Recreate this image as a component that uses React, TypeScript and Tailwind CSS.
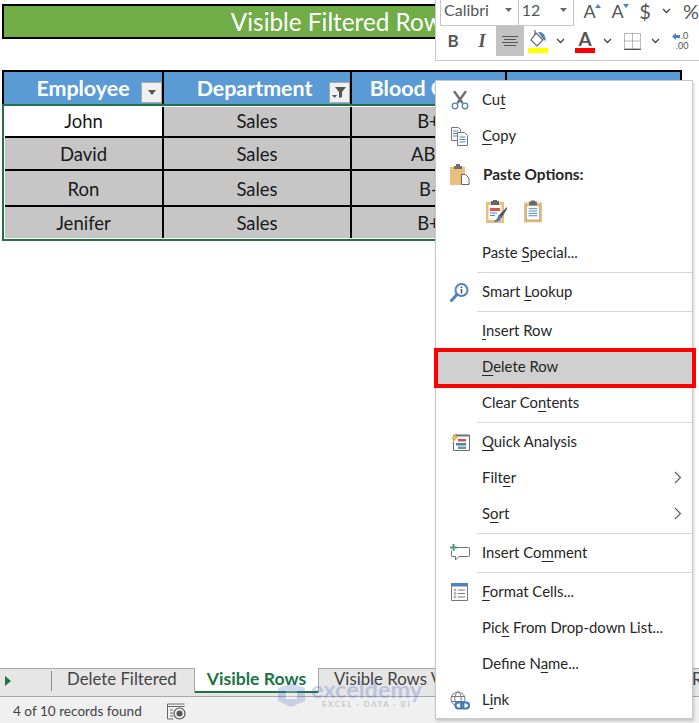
import { ReactNode } from 'react';

const rows = [
  ['John', 'Sales', 'B+', true],
  ['David', 'Sales', 'AB+', false],
  ['Ron', 'Sales', 'B-', false],
  ['Jenifer', 'Sales', 'B+', false],
] as const;

const rowHeights = ['h-[31px]', 'h-[33px]', 'h-[36px]', 'h-[31px]'];
const rowPads = ['', 'pt-[2px]', 'pt-[4px]', 'pt-[2px]'];

function Chevron() {
  return (
    <svg width="9" height="6" viewBox="0 0 9 6" fill="none">
      <path d="M1 1l3.5 3.5L8 1" stroke="#444" strokeWidth="1.3" />
    </svg>
  );
}

function CaretDown() {
  return (
    <svg width="7" height="4" viewBox="0 0 7 4">
      <path d="M0 0h7L3.5 4z" fill="#666" />
    </svg>
  );
}

function FilterButton({ filtered }: { filtered?: boolean }) {
  return (
    <div className="absolute right-0 bottom-[1px] flex h-[21px] w-[21px] items-center justify-center border border-[#a9a9a9] bg-[#f0f0f0]">
      {filtered ? (
        <svg width="15" height="13" viewBox="0 0 15 13">
          <path d="M3 1h11L10 6v5l-3 1V6z" fill="#555" />
          <path d="M0 9h5L2.5 12z" fill="#555" />
        </svg>
      ) : (
        <svg width="8" height="5" viewBox="0 0 8 5">
          <path d="M0 0h8L4 5z" fill="#555" />
        </svg>
      )}
    </div>
  );
}

function CutIcon() {
  return (
    <svg width="18" height="19" viewBox="0 0 18 19" fill="none">
      <path d="M3 0l8.5 12M15 0L6.5 12" stroke="#6f6f6f" strokeWidth="2.400" />
      <circle cx="4" cy="15" r="2.800" stroke="#4f81bd" strokeWidth="1.300" />
      <circle cx="14" cy="15" r="2.800" stroke="#4f81bd" strokeWidth="1.300" />
    </svg>
  );
}

function CopyIcon() {
  return (
    <svg width="18" height="19" viewBox="0 0 18 19" fill="none">
      <path d="M.5.5h7l2 2v11H.5z" fill="#fff" stroke="#777" />
      <path d="M2 4h5M2 6.500h5M2 9h4" stroke="#4f81bd" />
      <path d="M6.500 5.500h7l3 3v10h-10z" fill="#fff" stroke="#777" />
      <path d="M8.500 10h6M8.500 12.500h6M8.500 15h6" stroke="#4f81bd" />
    </svg>
  );
}

function PasteIcon() {
  return (
    <svg width="20" height="21" viewBox="0 0 20 21">
      <path d="M0 3h15v18H0z" fill="#e8bf7f" />
      <path d="M4 2h2V0h4v2h2v3H4z" fill="#6f6f6f" />
      <path d="M11.500 10.500h4l3.500 3.500v6.500h-7.500z" fill="#fff" stroke="#666" />
    </svg>
  );
}

function PasteFormulaIcon() {
  return (
    <svg width="22" height="23" viewBox="0 0 22 23">
      <path d="M0 2h18v21H0z" fill="#e8bf7f" />
      <path d="M2.500 5h13v15h-13z" fill="#fff" />
      <path d="M5 1h2V0h4v1h2v4H5z" fill="#666" />
      <path d="M4 8h10v3H4z" fill="#d9534f" />
      <path d="M4 13h7M4 15.500h5" stroke="#4f81bd" />
      <path d="M21 7L13 15l-2 4-3 3 5-1 3-4 5-8z" fill="#555" />
      <path d="M13 15l3 2-3 4-5 1 3-3z" fill="#4f81bd" />
    </svg>
  );
}

function PasteValuesIcon() {
  return (
    <svg width="18" height="23" viewBox="0 0 19 23">
      <path d="M0 2h19v21H0z" fill="#e8bf7f" />
      <path d="M2.500 5h14v15.500h-14z" fill="#fff" stroke="#666" strokeWidth=".5" />
      <path d="M5.500 1h2V0h4v1h2v4h-8z" fill="#666" />
      <path d="M5 8.500h9M5 11h9M5 13.500h9M5 16h9" stroke="#4f81bd" />
    </svg>
  );
}

function LookupIcon() {
  return (
    <svg width="19" height="19" viewBox="0 0 19 19" fill="none">
      <circle cx="11.500" cy="7" r="6" stroke="#4f81bd" strokeWidth="2" />
      <path d="M1.500 17.500l5.500-6" stroke="#4f81bd" strokeWidth="3" strokeLinecap="round" />
      <path d="M11.500 3.500v1.500M11.500 6v4.500" stroke="#555" strokeWidth="1.600" />
    </svg>
  );
}

function QuickAnalysisIcon() {
  return (
    <svg width="20" height="18" viewBox="0 0 20 18" fill="none">
      <path d="M3.500 2.500h16v15h-16z" fill="#fff" stroke="#6f6f6f" />
      <path d="M4 2.500h15.500" stroke="#6f6f6f" strokeWidth="2" />
      <path d="M8 6h8v2.500H8z" fill="#d9534f" />
      <path d="M6 10h10v2.500H6z" fill="#4f81bd" />
      <path d="M8 13.500h8V16H8z" fill="#5ea38b" />
      <path d="M6 0L1 6h3L2 11l6-7H5l2-4z" fill="#f0b94c" />
    </svg>
  );
}

function CommentIcon() {
  return (
    <svg width="20" height="18" viewBox="0 0 20 18" fill="none">
      <path d="M7 3.500h11.500q1 0 1 1v7q0 1-1 1H9l-3.500 3.500v-3.500H2q-.5 0-.5-1V7" stroke="#6f6f6f" />
      <path d="M3.500 0v7M0 3.500h7" stroke="#4e9c82" strokeWidth="2" />
    </svg>
  );
}

function FormatCellsIcon() {
  return (
    <svg width="17" height="18" viewBox="0 0 17 18" fill="none">
      <path d="M.5.500h16v17H.5z" fill="#fff" stroke="#777" />
      <path d="M0 0h17v3.500H0z" fill="#4f81bd" />
      <path d="M7 7h7M7 10.500h7M7 14h7" stroke="#777" />
      <circle cx="4" cy="7" r="1" stroke="#777" strokeWidth=".7" />
      <circle cx="4" cy="10.500" r="1" stroke="#777" strokeWidth=".7" />
      <circle cx="4" cy="14" r="1" stroke="#777" strokeWidth=".7" />
    </svg>
  );
}

function LinkIcon() {
  return (
    <svg width="20" height="19" viewBox="0 0 20 19" fill="none">
      <circle cx="8" cy="8" r="7" stroke="#7a7a7a" />
      <ellipse cx="8" cy="8" rx="3.200" ry="7" stroke="#7a7a7a" />
      <path d="M1 5.500h14M1 10.500h14" stroke="#7a7a7a" />
      <rect x="5.500" y="11.500" width="8" height="6" rx="3" fill="#fff" stroke="#3f78b5" strokeWidth="2" />
      <rect x="11" y="11.500" width="8" height="6" rx="3" stroke="#3f78b5" strokeWidth="2" />
    </svg>
  );
}

function MenuItem({
  icon,
  arrow,
  children,
}: {
  icon?: ReactNode;
  arrow?: boolean;
  children: ReactNode;
}) {
  return (
    <div className="flex h-[36px] items-center">
      <div className="flex w-[46px] shrink-0 items-center justify-center pl-[1px]">{icon}</div>
      <span className="flex-1 pb-[2px]">{children}</span>
      {arrow && (
        <svg className="mr-[10px] mb-[2px]" width="8" height="13" viewBox="0 0 8 13" fill="none">
          <path d="M1 1l5.500 5.500L1 12" stroke="#555" strokeWidth="1.100" />
        </svg>
      )}
    </div>
  );
}

function Separator() {
  return (
    <div className="flex h-[3px] items-center pl-[41px]">
      <div className="h-px w-full bg-[#d8d8d8]" />
    </div>
  );
}

function Mn({ children }: { children: ReactNode }) {
  return <u className="underline-offset-[3px]">{children}</u>;
}

function ContextMenu() {
  return (
    <div className="absolute top-[80px] left-[435px] w-[258px] border border-[#c8c8c8] bg-white pt-[1px] text-[14.9px] text-[#262626] shadow-[1px_2px_3px_rgba(0,0,0,0.18)]">
      <MenuItem icon={<CutIcon />}>
        Cu<Mn>t</Mn>
      </MenuItem>
      <MenuItem icon={<CopyIcon />}>
        <Mn>C</Mn>opy
      </MenuItem>
      <div className="flex h-[40px] items-center">
        <div className="flex w-[46px] shrink-0 items-center justify-center pl-[1px]">
          <PasteIcon />
        </div>
        <span className="ml-[1px] pt-[2px] text-[15.400px] font-bold">Paste Options:</span>
      </div>
      <div className="flex h-[41px] items-center gap-[16px] pb-[6px] pl-[50px]">
        <PasteFormulaIcon />
        <PasteValuesIcon />
      </div>
      <MenuItem>
        Paste <Mn>S</Mn>pecial...
      </MenuItem>
      <Separator />
      <MenuItem icon={<LookupIcon />}>
        Smart <Mn>L</Mn>ookup
      </MenuItem>
      <Separator />
      <MenuItem>
        <Mn>I</Mn>nsert Row
      </MenuItem>
      <div className="relative bg-[#d0d0d0]">
        <MenuItem>
          <Mn>D</Mn>elete Row
        </MenuItem>
        <div className="absolute -top-[1px] -right-[4px] -bottom-[3px] -left-[2px] border-[4px] border-[#ff0000]" />
      </div>
      <MenuItem>
        Clear Co<Mn>n</Mn>tents
      </MenuItem>
      <Separator />
      <MenuItem icon={<QuickAnalysisIcon />}>
        <Mn>Q</Mn>uick Analysis
      </MenuItem>
      <MenuItem arrow>
        Filt<Mn>e</Mn>r
      </MenuItem>
      <MenuItem arrow>
        S<Mn>o</Mn>rt
      </MenuItem>
      <Separator />
      <MenuItem icon={<CommentIcon />}>
        Insert Co<Mn>m</Mn>ment
      </MenuItem>
      <Separator />
      <MenuItem icon={<FormatCellsIcon />}>
        <Mn>F</Mn>ormat Cells...
      </MenuItem>
      <MenuItem>
        Pic<Mn>k</Mn> From Drop-down List...
      </MenuItem>
      <MenuItem>
        Define N<Mn>a</Mn>me...
      </MenuItem>
      <MenuItem icon={<LinkIcon />}>
        L<Mn>i</Mn>nk
      </MenuItem>
    </div>
  );
}

function MiniToolbar() {
  return (
    <div className="absolute top-0 left-[435px] h-[61px] w-[264px] border-b border-l border-[#c8c8c8] bg-white text-[#555]">
      <div className="flex h-[26px] items-center pl-[4px]">
        <div className="flex h-[26px] w-[79px] items-center justify-between border border-t-0 border-[#c8c8c8] pr-[6px] pb-[6px] pl-[3px] text-[16px]">
          Calibri <CaretDown />
        </div>
        <div className="-ml-px flex h-[26px] w-[56px] items-center justify-between border border-t-0 border-[#c8c8c8] pr-[6px] pb-[6px] pl-[3px] text-[16px]">
          12 <CaretDown />
        </div>
        <div className="relative ml-[10px] w-[18px] pb-[4px] text-[18px] leading-none">
          A
          <svg className="absolute top-[2px] right-0" width="6" height="4" viewBox="0 0 6 4">
            <path d="M0 4l3-4 3 4z" fill="#4f81bd" />
          </svg>
        </div>
        <div className="relative ml-[10px] w-[18px] pb-[4px] text-[18px] leading-none">
          A
          <svg className="absolute top-[2px] right-0" width="6" height="4" viewBox="0 0 6 4">
            <path d="M0 0h6L3 4z" fill="#4f81bd" />
          </svg>
        </div>
        <span className="ml-[10px] pb-[5px] text-[20px] leading-none">$</span>
        <span className="ml-[11px] pb-[4px]">
          <Chevron />
        </span>
        <span className="ml-[12px] pb-[5px] text-[20px] leading-none">%</span>
      </div>
      <div className="flex h-[30px] items-center pl-[7px]">
        <span className="w-[20px] text-center text-[17px] font-bold">B</span>
        <span className="ml-[9px] w-[20px] text-center font-['Liberation_Serif',serif] text-[18px] font-bold italic">
          I
        </span>
        <div className="ml-[4px] flex h-[30px] w-[28px] flex-col items-center justify-center gap-[2px] bg-[#c2c2c2]">
          <div className="h-px w-[16px] bg-[#555]" />
          <div className="h-px w-[12px] bg-[#555]" />
          <div className="h-px w-[16px] bg-[#555]" />
          <div className="h-px w-[12px] bg-[#555]" />
        </div>
        <svg className="ml-[4px]" width="20" height="23" viewBox="0 0 20 23" fill="none">
          <path d="M8 3l7 7-6 6-6-6z" stroke="#666" strokeWidth="1.200" />
          <path d="M7 0v5" stroke="#666" strokeWidth="1.200" />
          <path d="M10 2q7-1 8 9l-3-2z" fill="#4f81bd" />
          <path d="M0 18h20v5H0z" fill="#ffff00" />
        </svg>
        <span className="ml-[8px]">
          <Chevron />
        </span>
        <div className="ml-[10px] flex w-[20px] flex-col items-center">
          <span className="h-[18px] text-[19px] leading-[18px] font-bold">A</span>
          <div className="h-[5px] w-[20px] bg-[#ff0000]" />
        </div>
        <span className="ml-[8px]">
          <Chevron />
        </span>
        <svg className="ml-[12px]" width="17" height="17" viewBox="0 0 17 17" fill="none">
          <path d="M.5.500h16v15H.5zM8.500 .5v15M.5 8h16" stroke="#777" strokeDasharray="1 1" />
          <path d="M0 16.500h17" stroke="#555" />
        </svg>
        <span className="ml-[10px]">
          <Chevron />
        </span>
        <div className="ml-[12px] flex flex-col items-end text-[9px] leading-[10px]">
          <span className="flex items-center gap-[1px]">
            <svg width="8" height="7" viewBox="0 0 8 7">
              <path d="M0 3.500L4 0v2h4v3H4v2z" fill="#4f81bd" />
            </svg>
            .0
          </span>
          <span>.00</span>
        </div>
      </div>
    </div>
  );
}

function Watermark() {
  return (
    <div className="absolute top-[680px] left-[278px] flex items-start gap-[6px] opacity-25">
      <svg className="mt-[3px]" width="27" height="24" viewBox="0 0 27 24">
        <path d="M0 5l13-5 14 5v13l-14 6-13-6z" fill="#4f6fd0" />
        <path d="M8 8h11v8H8z" fill="#fff" />
      </svg>
      <div className="flex flex-col items-center">
        <span className="text-[23.500px] leading-[19px] font-bold text-[#3d5cc4]">exceldemy</span>
        <span className="text-[8px] leading-[10px] font-bold tracking-[1.500px] text-[#555]">EXCEL · DATA · BI</span>
      </div>
    </div>
  );
}

export default function App() {
  return (
    <div className="relative flex h-[723px] w-[699px] flex-col overflow-hidden bg-white font-['Lato',sans-serif]">
      <div className="mt-[4px] ml-[2px] flex h-[35px] w-[680px] items-center justify-center border-2 border-black bg-[#70ad47] pt-[2px] text-[24.300px] text-white">
        Visible Filtered Rows
      </div>

      <div className="mt-[31px] ml-[2px] w-[680px]">
        <div className="grid h-[34px] grid-cols-[160px_188px_155px_1fr] border-t-2 border-r-2 border-l-2 border-black bg-[#5b9bd5] text-[21.400px] font-bold text-white">
          {['Employee', 'Department', 'Blood Group', ''].map((h, i) => (
            <div
              key={i}
              className={`relative flex items-center justify-center border-r-2 border-black last:border-r-0 ${i === 1 ? 'pr-[5px]' : ''} ${i === 2 ? 'pl-[3px]' : ''}`}
            >
              {h}
              {i < 2 && <FilterButton filtered={i === 1} />}
            </div>
          ))}
        </div>
        <div className="border-2 border-[#217346] p-px text-[18.500px] text-[#1a1a1a]">
          {rows.map(([name, dept, blood, selected], r) => (
            <div
              key={name}
              className={`grid grid-cols-[159px_188px_155px_1fr] border-black ${rowHeights[r]} ${r < 3 ? 'border-b-2' : ''}`}
            >
              <div
                className={`flex items-center justify-center border-r-2 border-black ${rowPads[r]} ${selected ? 'bg-white' : 'bg-[#c6c6c6]'}`}
              >
                {name}
              </div>
              <div className={`flex items-center justify-center border-r-2 border-black bg-[#c6c6c6] ${rowPads[r]}`}>
                {dept}
              </div>
              <div className={`flex items-center justify-center border-r-2 border-black bg-[#c6c6c6] ${rowPads[r]}`}>
                {blood}
              </div>
              <div className="bg-[#c6c6c6]" />
            </div>
          ))}
        </div>
      </div>

      <div className="mt-auto flex h-[29px] border-t border-b border-[#a8a8a8] bg-[#e6e6e6] pb-[3px] text-[16.800px] text-[#444]">
        <div className="flex w-[51px] shrink-0 items-center pl-[5px]">
          <svg width="6" height="10" viewBox="0 0 6 10">
            <path d="M0 0l6 5-6 5z" fill="#217346" />
          </svg>
        </div>
        <div className="my-[2px] w-px shrink-0 bg-[#8c8c8c]" />
        <div className="flex w-[143px] shrink-0 items-center border-r border-[#a8a8a8] pb-[4px] pl-[15px]">
          Delete Filtered
        </div>
        <div className="-mt-px flex w-[123px] shrink-0 items-center justify-center border-b-2 border-[#217346] bg-white text-[17.600px] font-bold text-[#217346]">
          Visible Rows
        </div>
        <div className="flex w-[300px] shrink-0 items-center border-l border-[#a8a8a8] pb-[4px] pl-[15px] whitespace-nowrap">
          Visible Rows VBA
        </div>
        <div className="flex shrink-0 items-center pb-[4px] pl-[74px] whitespace-nowrap">R</div>
      </div>
      <div className="flex h-[26px] items-center bg-[#f0f0f0] pt-[2px] pl-[13px] text-[13.600px] text-[#444]">
        4 of 10 records found
        <svg className="ml-[25px]" width="19" height="17" viewBox="0 0 19 17" fill="none">
          <path d="M.5 1h17M.5 3.500h17" stroke="#666" />
          <path d="M.5 1v15h6" stroke="#666" />
          <path d="M3 7h3M3 10h3M3 13h3" stroke="#666" />
          <circle cx="12.500" cy="10.500" r="5.500" stroke="#555" strokeWidth="1.200" />
          <circle cx="12.500" cy="10.500" r="3" fill="#555" />
        </svg>
      </div>

      <Watermark />
      <MiniToolbar />
      <ContextMenu />
    </div>
  );
}
